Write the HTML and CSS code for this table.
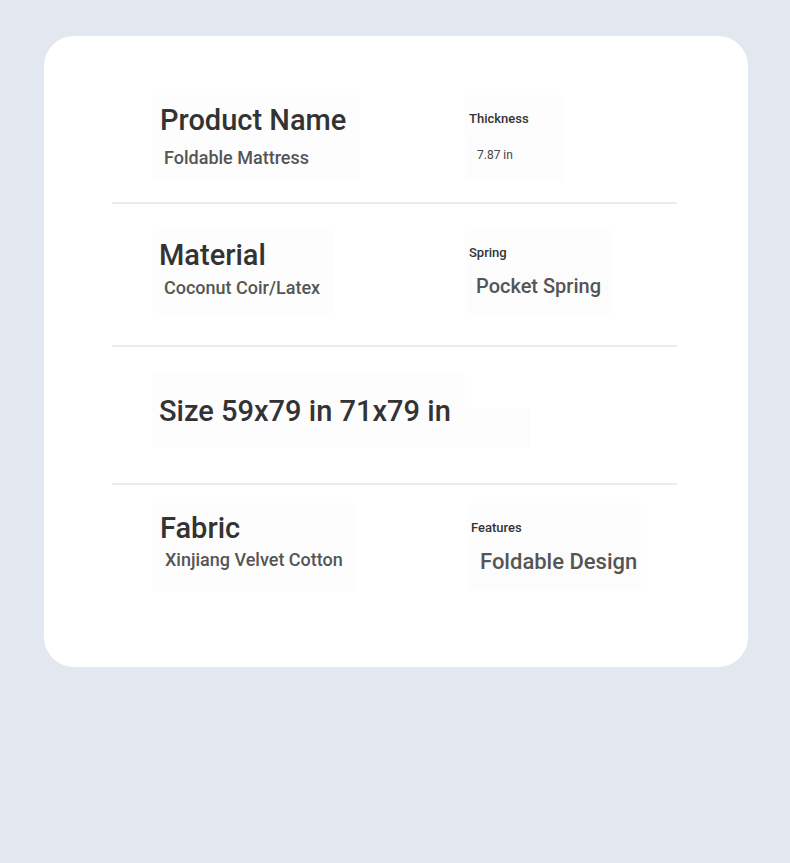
FILE: index.html
```html
<!DOCTYPE html>
<html lang="en">

<head>
  <meta charset="UTF-8">
  <meta name="viewport" content="width=device-width, initial-scale=1.0">
  <title>Product Specs</title>
  <link rel="stylesheet" href="styles.css">
</head>

<body>
  <div class="card">
    <div class="spec-row row-name">
      <div class="cell main">
        <h2 class="title">Product Name</h2>
        <p class="sub">Foldable Mattress</p>
      </div>
      <div class="cell side">
        <span class="label">Thickness</span>
        <div class="value small">7.87 in</div>
      </div>
    </div>

    <div class="spec-row row-material">
      <div class="cell main">
        <h2 class="title">Material</h2>
        <p class="sub">Coconut Coir/Latex</p>
      </div>
      <div class="cell side">
        <span class="label">Spring</span>
        <div class="value mid">Pocket Spring</div>
      </div>
    </div>

    <div class="spec-row row-size">
      <div class="cell main">
        <h2 class="title">Size 59x79 in 71x79 in</h2>
      </div>
      <div class="cell side">
        <div class="value empty"></div>
      </div>
    </div>

    <div class="spec-row row-fabric">
      <div class="cell main">
        <h2 class="title">Fabric</h2>
        <p class="sub">Xinjiang Velvet Cotton</p>
      </div>
      <div class="cell side">
        <span class="label">Features</span>
        <div class="value large">Foldable Design</div>
      </div>
    </div>
  </div>
</body>

</html>
```

FILE: styles.css
```css
body {
  margin: 0;
  background-color: #e3e8f0;
  font-family: 'Roboto', 'Liberation Sans', sans-serif;
  height: 863px;
}

.card {
  margin: 36px 42px 0 44px;
  background: white;
  border-radius: 30px;
  padding: 56px 71px 0 68px;
  height: 631px;
  box-sizing: border-box;
}

.spec-row {
  display: grid;
  grid-template-columns: 313px 1fr;
  padding: 0 40px;
  border-bottom: 2px solid #ebebeb;
}

.spec-row:last-child {
  border-bottom: none;
}

.cell {
  background: #fdfdfd;
  border-radius: 4px;
}

.main {
  justify-self: start;
  padding: 8px 14px 12px 8px;
}

.side {
  justify-self: start;
  padding: 8px 4px 4px 4px;
  white-space: nowrap;
}

.title {
  margin: 0;
  font-size: 29px;
  line-height: 34px;
  font-weight: 500;
  color: #333;
  white-space: nowrap;
}

.sub {
  margin: 10px 0 0 4px;
  font-size: 18px;
  line-height: 22px;
  font-weight: 500;
  color: #555;
}

.label {
  display: block;
  font-size: 13px;
  line-height: 16px;
  font-weight: 500;
  color: #333;
  margin-top: 8px;
}

.value {
  background: #fcfcfc;
  color: #444;
  border-radius: 4px;
}

.value.small {
  font-size: 12px;
  line-height: 15px;
  padding: 11px 48px 14px 8px;
  margin-top: 10px;
}

.value.mid {
  font-size: 20px;
  line-height: 24px;
  font-weight: 500;
  padding: 10px 7px 12px 7px;
  margin-top: 3px;
  color: #555;
}

.value.large {
  font-size: 22px;
  line-height: 26px;
  font-weight: 500;
  padding: 10px 0 12px 9px;
  margin-top: 3px;
  color: #555;
}

.value.empty {
  width: 65px;
  height: 40px;
}

/* row tuning */
.row-name {
  padding-top: 3px;
  padding-bottom: 21px;
}

.row-material {
  padding-top: 26px;
  padding-bottom: 31px;
}

.row-material .title {
  margin-left: -1px;
}

.row-material .sub {
  margin-top: 5px;
}

.row-material .label {
  margin-top: 7px;
}

.row-size {
  padding-top: 23px;
  padding-bottom: 35px;
}

.row-size .main {
  padding: 24px 14px 20px 7px;
}

.row-size .side {
  align-self: end;
  padding: 0;
}

.row-fabric {
  padding-top: 18px;
}

.row-fabric .main {
  padding-left: 8px;
}

.row-fabric .sub {
  margin-top: 4px;
  margin-left: 5px;
}

.row-fabric .side {
  margin-left: 2px;
}

.row-fabric .label {
  margin-top: 9px;
}
```
